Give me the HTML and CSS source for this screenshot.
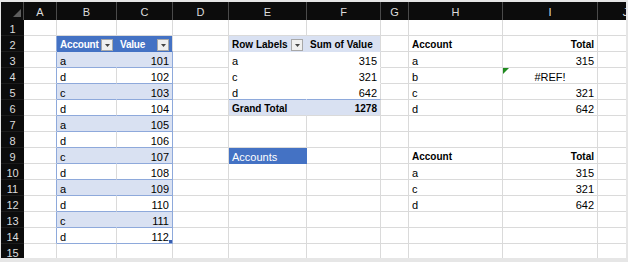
FILE: index.html
```html
<!DOCTYPE html>
<html lang="en">
<head>
    <meta charset="UTF-8">
    <title>Book1 - Sheet1</title>
    <link rel="stylesheet" href="styles.css">
</head>
<body>

<div class="sheet">
    <div class="row head">
        <div class="corner">
            <svg width="8" height="8" viewBox="0 0 8 8"><polygon points="8,0 8,8 0,8" fill="#5e5e5e"/></svg>
        </div>
        <div>A</div><div>B</div><div>C</div><div>D</div><div>E</div>
        <div>F</div><div>G</div><div>H</div><div>I</div><div>J</div>
    </div>

    <div class="row">
        <div class="num">1</div>
        <div></div><div></div><div></div><div></div><div></div>
        <div></div><div></div><div></div><div></div><div></div>
    </div>

    <div class="row">
        <div class="num">2</div>
        <div class="edge"></div>
        <div class="th filter join"><span>Account</span><span class="drop"><svg width="5" height="3" viewBox="0 0 5 3"><polygon points="0,0 5,0 2.5,3" fill="#444"/></svg></span></div>
        <div class="th filter"><span>Value</span><span class="drop"><svg width="5" height="3" viewBox="0 0 5 3"><polygon points="0,0 5,0 2.5,3" fill="#444"/></svg></span></div>
        <div></div>
        <div class="pvh filter join"><span>Row Labels</span><span class="drop"><svg width="5" height="3" viewBox="0 0 5 3"><polygon points="0,0 5,0 2.5,3" fill="#444"/></svg></span></div>
        <div class="pvh">Sum of Value</div>
        <div></div>
        <div class="b">Account</div>
        <div class="b r">Total</div>
        <div></div>
    </div>

    <div class="row">
        <div class="num">3</div>
        <div class="edge"></div>
        <div class="tb band join">a</div>
        <div class="tb band tr r">101</div>
        <div></div>
        <div class="join flat">a</div>
        <div class="flat r">315</div>
        <div></div>
        <div>a</div>
        <div class="r">315</div>
        <div></div>
    </div>

    <div class="row">
        <div class="num">4</div>
        <div class="edge"></div>
        <div class="tb">d</div>
        <div class="tb tr r">102</div>
        <div></div>
        <div class="join flat">c</div>
        <div class="flat r">321</div>
        <div></div>
        <div>b</div>
        <div class="err c">#REF!</div>
        <div></div>
    </div>

    <div class="row">
        <div class="num">5</div>
        <div class="edge"></div>
        <div class="tb band join">c</div>
        <div class="tb band tr r">103</div>
        <div></div>
        <div class="join gtl">d</div>
        <div class="gtl r">642</div>
        <div></div>
        <div>c</div>
        <div class="r">321</div>
        <div></div>
    </div>

    <div class="row">
        <div class="num">6</div>
        <div class="edge"></div>
        <div class="tb">d</div>
        <div class="tb tr r">104</div>
        <div></div>
        <div class="pvt join">Grand Total</div>
        <div class="pvt r">1278</div>
        <div></div>
        <div>d</div>
        <div class="r">642</div>
        <div></div>
    </div>

    <div class="row">
        <div class="num">7</div>
        <div class="edge"></div>
        <div class="tb band join">a</div>
        <div class="tb band tr r">105</div>
        <div></div><div></div><div></div><div></div><div></div><div></div><div></div>
    </div>

    <div class="row">
        <div class="num">8</div>
        <div class="edge"></div>
        <div class="tb">d</div>
        <div class="tb tr r">106</div>
        <div></div><div></div><div></div><div></div><div></div><div></div><div></div>
    </div>

    <div class="row">
        <div class="num">9</div>
        <div class="edge"></div>
        <div class="tb band join">c</div>
        <div class="tb band tr r">107</div>
        <div></div>
        <div class="acc">Accounts</div>
        <div></div>
        <div></div>
        <div class="b">Account</div>
        <div class="b r">Total</div>
        <div></div>
    </div>

    <div class="row">
        <div class="num">10</div>
        <div class="edge"></div>
        <div class="tb">d</div>
        <div class="tb tr r">108</div>
        <div></div><div></div><div></div><div></div>
        <div>a</div>
        <div class="r">315</div>
        <div></div>
    </div>

    <div class="row">
        <div class="num">11</div>
        <div class="edge"></div>
        <div class="tb band join">a</div>
        <div class="tb band tr r">109</div>
        <div></div><div></div><div></div><div></div>
        <div>c</div>
        <div class="r">321</div>
        <div></div>
    </div>

    <div class="row">
        <div class="num">12</div>
        <div class="edge"></div>
        <div class="tb">d</div>
        <div class="tb tr r">110</div>
        <div></div><div></div><div></div><div></div>
        <div>d</div>
        <div class="r">642</div>
        <div></div>
    </div>

    <div class="row">
        <div class="num">13</div>
        <div class="edge"></div>
        <div class="tb band join">c</div>
        <div class="tb band tr r">111</div>
        <div></div><div></div><div></div><div></div><div></div><div></div><div></div>
    </div>

    <div class="row">
        <div class="num">14</div>
        <div class="edge"></div>
        <div class="tb">d</div>
        <div class="tb tr r handle">112</div>
        <div></div><div></div><div></div><div></div><div></div><div></div><div></div>
    </div>

    <div class="row">
        <div class="num">15</div>
        <div></div><div></div><div></div><div></div><div></div>
        <div></div><div></div><div></div><div></div><div></div>
    </div>
</div>

</body>
</html>
```

FILE: styles.css
```css
body {
    margin: 0;
    background-color: #e6e6e6;
    font-family: "Liberation Sans", Arial, sans-serif;
    font-size: 11px;
    color: #000;
}

.sheet {
    margin: 2px 2px 0 1px;
    height: 256px;
    overflow: hidden;
    background-color: #fff;
}

.row {
    display: grid;
    grid-template-columns: 23px 33px 60px 56px 56px 78px 74px 28px 94px 95px 56px;
    height: 16px;
}

.row > div {
    box-sizing: border-box;
    border-right: 1px solid #dadada;
    border-bottom: 1px solid #dadada;
    padding: 3px 3px 0 3px;
    line-height: 12px;
    white-space: nowrap;
    overflow: hidden;
}

/* column letters and row numbers */
.head {
    height: 18px;
    background-color: #0c0c0c;
}

.head > div {
    border-bottom: none;
    border-right-color: #4a4a4a;
    color: #dcdcdc;
    text-align: center;
    padding: 4px 0 0 0;
}

.head > .corner {
    display: flex;
    justify-content: flex-end;
    align-items: flex-end;
    padding: 0 2px 3px 0;
}

.row > .num {
    background-color: #0c0c0c;
    color: #dcdcdc;
    text-align: center;
    border-right: none;
    border-bottom-color: #1c1c1c;
    padding-left: 0;
    padding-right: 0;
}

.r {
    text-align: right;
}

.c {
    text-align: center;
}

.b,
.th,
.pvh,
.pvt {
    font-weight: bold;
    font-size: 10px;
}

.row > .join {
    border-right-color: transparent;
}

.row > .flat {
    border-bottom-color: transparent;
}

/* excel table B2:C14 */
.row > .edge {
    border-right-color: #8ea9db;
}

.row > .th {
    background-color: #4472c4;
    color: #fff;
    border-bottom-color: #4472c4;
    letter-spacing: -0.2px;
}

.row > .tb {
    border-bottom-color: #8ea9db;
}

.row > .tr {
    border-right-color: #8ea9db;
}

.band {
    background-color: #d9e1f2;
}

.row > .filter {
    display: flex;
    justify-content: space-between;
    align-items: flex-end;
    padding-top: 0;
}

.drop {
    box-sizing: border-box;
    width: 12px;
    height: 12px;
    border: 1px solid #a8a8a8;
    background-color: #f0f0f0;
    display: flex;
    justify-content: center;
    align-items: center;
    flex-shrink: 0;
}

.handle {
    position: relative;
}

.handle::after {
    content: "";
    position: absolute;
    right: 0;
    bottom: -1px;
    width: 3px;
    height: 4px;
    background-color: #3a5fb0;
}

/* pivot table E2:F6 */
.row > .pvh {
    background-color: #d9e1f2;
    border-bottom-color: transparent;
}

.row > .gtl {
    border-bottom-color: #8ea9db;
}

.row > .pvt {
    background-color: #d9e1f2;
}

.row > .acc {
    background-color: #4472c4;
    color: #fff;
    border-color: transparent;
}

.err {
    position: relative;
}

.err::before {
    content: "";
    position: absolute;
    left: 0;
    top: 0;
    border-top: 6px solid #1e8a1e;
    border-right: 6px solid transparent;
}
```
